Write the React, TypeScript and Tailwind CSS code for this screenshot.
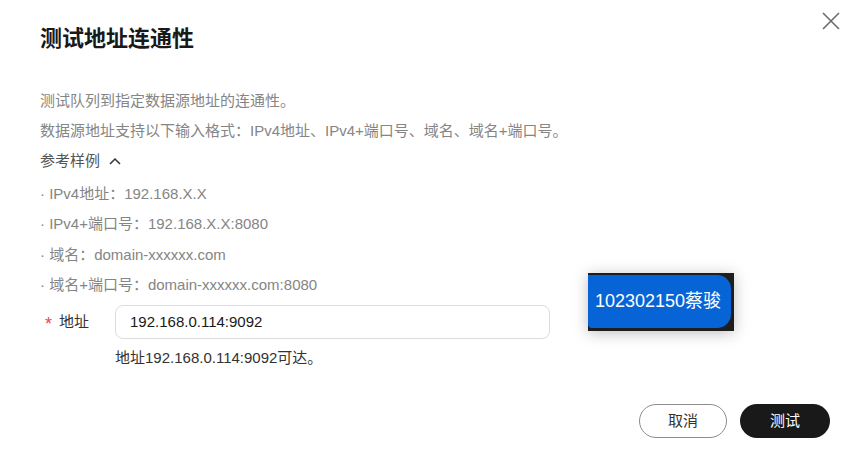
import React from "react";

export default function App() {
  const font = { fontFamily: '"Liberation Sans", "Noto Sans CJK SC", sans-serif' };
  return (
    <div className="relative w-[865px] h-[468px] bg-white overflow-hidden" style={font}>
      <button className="absolute left-[820px] top-[10px] w-[22px] h-[22px] flex items-center justify-center">
        <svg width="20" height="20" viewBox="0 0 20 20" fill="none" stroke="#6b6b6b" strokeWidth="1.6">
          <path d="M2 2 L18 18 M18 2 L2 18" />
        </svg>
      </button>

      <div className="pl-[40px] pt-[24px]">
        <div className="text-[22px] leading-[30px] font-bold text-[#191919]">测试地址连通性</div>

        <div className="mt-[32px] text-[15px] leading-[30px] text-[#858585]">
          <div>测试队列到指定数据源地址的连通性。</div>
          <div>数据源地址支持以下输入格式：IPv4地址、IPv4+端口号、域名、域名+端口号。</div>
          <div className="flex items-center gap-[9px] text-[#555]">
            <span>参考样例</span>
            <svg width="12" height="8" viewBox="0 0 12 8" fill="none" stroke="#333" strokeWidth="1.5">
              <path d="M1 7 L6 2 L11 7" />
            </svg>
          </div>
          <div className="mt-[3px]">
            <div>· IPv4地址：192.168.X.X</div>
            <div>· IPv4+端口号：192.168.X.X:8080</div>
            <div className="mt-[1px]">· 域名：domain-xxxxxx.com</div>
            <div>· 域名+端口号：domain-xxxxxx.com:8080</div>
          </div>
        </div>

        <div className="mt-[5px] flex items-center">
          <div className="w-[75px] flex items-center text-[15px] text-[#333]">
            <span className="ml-[5px] text-[#e5484d] text-[18px] leading-none mt-[4px]">*</span>
            <span className="ml-[7px]">地址</span>
          </div>
          <div className="w-[435px] h-[34px] border border-[#dcdcdc] rounded-[8px] flex items-center pl-[14px] text-[15px] text-[#191919]">
            192.168.0.114:9092
          </div>
        </div>

        <div className="mt-[9px] pl-[75px] text-[15px] leading-[20px] text-[#333]">
          地址192.168.0.114:9092可达。
        </div>

        <div className="mt-[36px] pr-[35px] flex justify-end gap-[13px]">
          <button className="w-[88px] h-[34px] rounded-full border border-[#8c8c8c] text-[15px] text-[#333] bg-white">
            取消
          </button>
          <button className="w-[90px] h-[34px] rounded-full bg-[#191919] text-[15px] text-white">
            测试
          </button>
        </div>
      </div>

      <div className="absolute left-[588px] top-[273px] w-[146px] h-[58px] bg-[#1e1e1e] shadow-[0_2px_14px_rgba(0,0,0,0.25)] pt-[2px] pr-[3px] pb-[3px]">
        <div className="h-full rounded-tr-[14px] rounded-br-[14px] rounded-bl-[4px] bg-[#0764d6] flex items-center pl-[7px] text-white text-[18px]">
          102302150蔡骏
        </div>
      </div>
    </div>
  );
}
